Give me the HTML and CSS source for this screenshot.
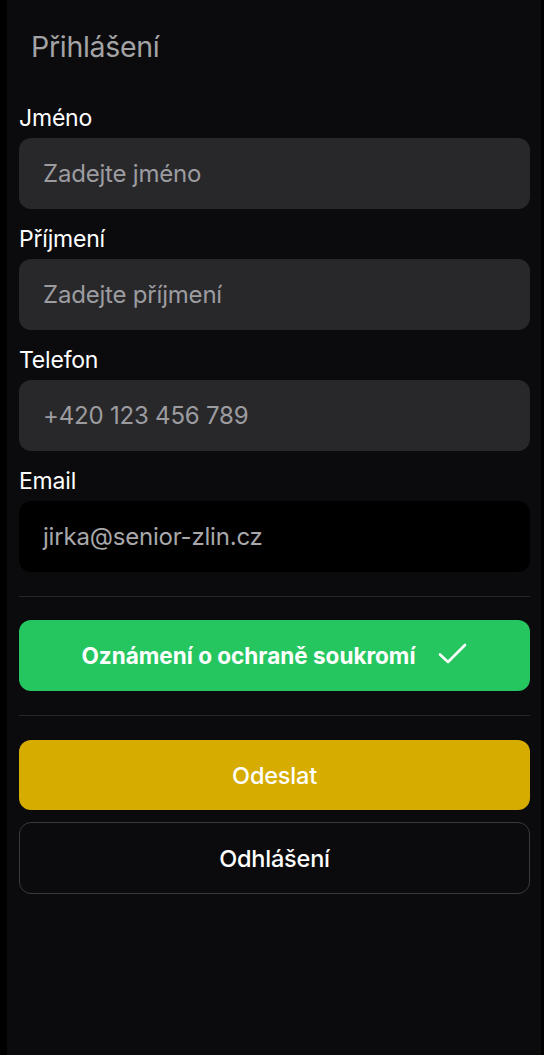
FILE: index.html
```html
<!DOCTYPE html>
<html lang="cs">
<head>
<meta charset="utf-8">
<title>Přihlášení</title>
<link rel="stylesheet" href="styles.css">
</head>
<body>
<div class="app">
  <h1 class="title">Přihlášení</h1>
  <form class="form">
    <div class="field">
      <label class="label">Jméno</label>
      <div class="input placeholder">Zadejte jméno</div>
    </div>
    <div class="field">
      <label class="label">Příjmení</label>
      <div class="input placeholder">Zadejte příjmení</div>
    </div>
    <div class="field">
      <label class="label">Telefon</label>
      <div class="input placeholder">+420 123 456 789</div>
    </div>
    <div class="field">
      <label class="label">Email</label>
      <div class="input input-dark">jirka@senior-zlin.cz</div>
    </div>
    <hr class="divider">
    <button type="button" class="btn btn-green">
      <span>Oznámení o ochraně soukromí</span>
      <svg class="check" width="30" height="24" viewBox="0 0 30 24" fill="none" stroke="#fff" stroke-width="2.6" stroke-linecap="round" stroke-linejoin="round"><path d="M2 12.5 L10 20 L27 3"/></svg>
    </button>
    <hr class="divider">
    <button type="button" class="btn btn-yellow">Odeslat</button>
    <button type="button" class="btn btn-outline">Odhlášení</button>
  </form>
</div>
</body>
</html>
```
FILE: styles.css
```css
html, body {
  margin: 0;
  padding: 0;
  background: #000;
}
body {
  font-family: Inter, "Liberation Sans", sans-serif;
  -webkit-font-smoothing: antialiased;
}
.app {
  margin-left: 7px;
  width: 534px;
  min-height: 1055px;
  background: #0b0b0d;
  padding: 30px 11px 0 12px;
  box-sizing: border-box;
}
.title {
  margin: 0 0 40px 12px;
  font-size: 28.5px;
  line-height: 34px;
  font-weight: 400;
  color: #a3a3a6;
  letter-spacing: -0.3px;
}
.form {
  display: flex;
  flex-direction: column;
}
.field {
  display: flex;
  flex-direction: column;
  gap: 6px;
  margin-bottom: 16px;
}
.field:nth-child(4) {
  margin-bottom: 0;
}
.label {
  font-size: 23px;
  line-height: 28px;
  color: #fff;
  letter-spacing: -0.2px;
}
.input {
  height: 71px;
  border-radius: 12px;
  background: #28282b;
  display: flex;
  align-items: center;
  padding-left: 24px;
  font-size: 24px;
  color: #9c9ca0;
  letter-spacing: -0.2px;
  box-sizing: border-box;
}
.input-dark {
  background: #000;
  color: #a8a8ab;
}
.divider {
  border: 0;
  height: 1px;
  background: #26262a;
  margin: 24px 0 23px;
}
.btn {
  border: 0;
  border-radius: 12px;
  font-family: inherit;
  font-size: 23.5px;
  color: #fff;
  display: flex;
  align-items: center;
  justify-content: center;
  cursor: pointer;
  letter-spacing: -0.2px;
}
.btn-green {
  height: 71px;
  background: #25c660;
  font-weight: 700;
  font-size: 22.5px;
  gap: 22px;
  letter-spacing: 0;
  padding-right: 6px;
}
.check {
  margin-top: -4px;
}
.btn-yellow {
  height: 70px;
  background: #d6ac00;
  font-weight: 500;
  margin-top: 1px;
}
.btn-outline {
  height: 72px;
  margin-top: 12px;
  background: transparent;
  border: 1.5px solid #3a3a3d;
  font-weight: 500;
}
```
